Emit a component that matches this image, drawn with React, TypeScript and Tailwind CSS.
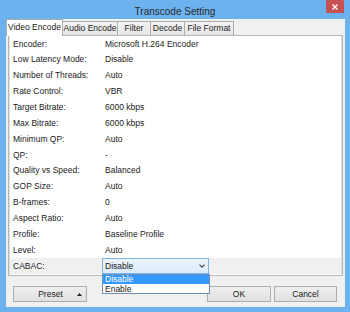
import React from "react";

const rows: [string, string][] = [
  ["Encoder:", "Microsoft H.264 Encoder"],
  ["Low Latency Mode:", "Disable"],
  ["Number of Threads:", "Auto"],
  ["Rate Control:", "VBR"],
  ["Target Bitrate:", "6000 kbps"],
  ["Max Bitrate:", "6000 kbps"],
  ["Minimum QP:", "Auto"],
  ["QP:", "-"],
  ["Quality vs Speed:", "Balanced"],
  ["GOP Size:", "Auto"],
  ["B-frames:", "0"],
  ["Aspect Ratio:", "Auto"],
  ["Profile:", "Baseline Profile"],
  ["Level:", "Auto"],
];

const tabs: { label: string; w: string }[] = [
  { label: "Audio Encode", w: "w-[56px]" },
  { label: "Filter", w: "w-[34px]" },
  { label: "Decode", w: "w-[35px]" },
  { label: "File Format", w: "w-[50px]" },
];

export default function App() {
  return (
    <div className="w-[350px] h-[312px] bg-[#6cb2ef] flex flex-col font-['Liberation_Sans',Arial,sans-serif] text-[8.5px] text-[#222222] overflow-hidden">
      {/* Title bar */}
      <div className="h-[19px] relative flex items-center justify-center shrink-0">
        <span className="text-[10px] text-[#2a2a2a] mt-[3px]">Transcode Setting</span>
        <div className="absolute right-[6px] top-0 w-[18px] h-[13px] bg-[#c75050] flex items-center justify-center">
          <svg width="6" height="6" viewBox="0 0 6 6">
            <path d="M0.5 0.5 L5.5 5.5 M5.5 0.5 L0.5 5.5" stroke="#ffffff" strokeWidth="1.4" />
          </svg>
        </div>
      </div>

      {/* Client area */}
      <div className="flex-1 ml-[6px] mr-[5px] mb-[5px] bg-[#f0f0f0] flex flex-col">
        {/* Tabs */}
        <div className="h-[16px] flex items-end shrink-0">
          <div className="w-[57px] h-[17px] -mb-px relative z-10 bg-white border border-b-0 border-[#acacac] flex items-center justify-center pb-[1px]">
            Video Encode
          </div>
          {tabs.map((t) => (
            <div
              key={t.label}
              className={`${t.w} h-[14px] -ml-px bg-gradient-to-b from-[#f3f3f3] to-[#e6e6e6] border border-b-0 border-[#acacac] flex items-center justify-center`}
            >
              {t.label}
            </div>
          ))}
        </div>

        {/* Panel */}
        <div className="mx-[2px] h-[241px] shrink-0 bg-white border border-[#b8b8b8] relative">
          <div className="h-full border-x border-[#dedede] flex flex-col">
            {rows.map(([k, v]) => (
              <div key={k} className="h-[15.86px] flex items-center pl-[3px] shrink-0">
                <span className="w-[92px] shrink-0">{k}</span>
                <span>{v}</span>
              </div>
            ))}
            <div className="h-[15.86px] flex items-stretch pl-[3px] bg-[#f0f0f0] shrink-0 relative z-20">
              <span className="w-[89px] shrink-0 flex items-center">CABAC:</span>
              <div className="w-[107px] relative">
                <div className="h-full border border-[#7eb4ea] bg-gradient-to-b from-[#ecf4fc] to-[#dcecfc] flex items-center justify-between pl-[2px] pr-[3px]">
                  <span>Disable</span>
                  <svg width="6" height="4" viewBox="0 0 6 4">
                    <path d="M0.5 0.7 L3 3.2 L5.5 0.7" stroke="#404040" strokeWidth="1.1" fill="none" />
                  </svg>
                </div>
                <div className="absolute left-0 top-full w-[108px] h-[20px] bg-white border border-[#6d8fb5] flex flex-col">
                  <div className="h-[9.5px] bg-[#3399ff] text-white flex items-center pl-[2px]">Disable</div>
                  <div className="h-[9.5px] flex items-center pl-[2px]">Enable</div>
                </div>
              </div>
            </div>
          </div>
        </div>

        {/* Buttons */}
        <div className="mt-[10px] h-[16px] flex pl-[7px] pr-[8px] shrink-0">
          <div className="w-[74px] h-full border border-[#adadad] bg-gradient-to-b from-[#efefef] to-[#e0e0e0] flex items-center relative">
            <span className="flex-1 text-center pl-[1px]">Preset</span>
            <svg className="absolute right-[4px] top-[6px]" width="5" height="3" viewBox="0 0 5 3">
              <path d="M0 3 L2.5 0 L5 3 Z" fill="#202020" />
            </svg>
          </div>
          <div className="flex-1" />
          <div className="w-[64px] h-full border border-[#adadad] bg-gradient-to-b from-[#efefef] to-[#e0e0e0] flex items-center justify-center">
            OK
          </div>
          <div className="w-[63px] h-full ml-[3px] border border-[#adadad] bg-gradient-to-b from-[#efefef] to-[#e0e0e0] flex items-center justify-center">
            Cancel
          </div>
        </div>
      </div>
    </div>
  );
}
